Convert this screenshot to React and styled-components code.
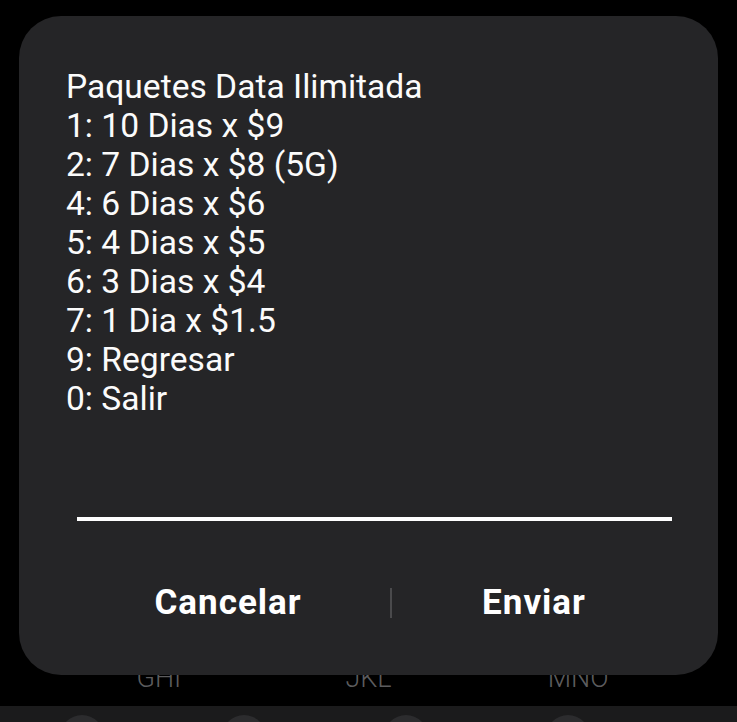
import React from 'react';
import styled, { createGlobalStyle } from 'styled-components';

const GlobalStyle = createGlobalStyle`
    html, body {
        margin: 0;
        padding: 0;
        background: #000;
    }
    body {
        font-family: Roboto, "Noto Sans", sans-serif;
    }
`

////////////// STYLING
const Screen = styled.div`
    position: relative;
    width: 737px;
    height: 722px;
    overflow: hidden;
    background: #000;
    display: flex;
    flex-direction: column;
    justify-content: flex-end;
`

// keyboard peeking out behind the dialog
const KeyRow = styled.div`
    display: flex;
    padding: 0 54px 10px;
    height: 36px;
    align-items: center;
`

const KeyLabel = styled.div`
    flex: 1;
    text-align: center;
    color: #5c5c5e;
    font-size: 27px;
    font-weight: 300;
`

const KeyBar = styled.div`
    height: 16px;
    background: #1b1b1c;
    display: flex;
    gap: 118px;
    padding-left: 60px;
`

const KeyCap = styled.div`
    width: 44px;
    height: 44px;
    margin-top: 9px;
    border-radius: 50%;
    background: #2c2c2e;
`

const Dialog = styled.div`
    position: absolute;
    top: 16px;
    left: 19px;
    width: 699px;
    height: 659px;
    box-sizing: border-box;
    border-radius: 42px;
    background: #252527;
    display: flex;
    flex-direction: column;
    padding: 51px 46px 0 47px;
`

const Message = styled.div`
    color: #fbfbfb;
    font-size: 33.6px;
    line-height: 39px;
    white-space: pre-line;
`

const InputLine = styled.div`
    margin: 99px 0 0 11px;
    height: 4px;
    width: 595px;
    background: #fff;
`

const Actions = styled.div`
    display: grid;
    grid-template-columns: 324px 2px 1fr;
    align-items: center;
    margin-top: 61px;
    margin-right: -4px;
`

const ActionButton = styled.button`
    background: none;
    border: none;
    color: #fff;
    font-family: Roboto, sans-serif;
    font-size: 35px;
    font-weight: 700;
    letter-spacing: 1px;
    padding: 0;
    text-align: center;
`

const Divider = styled.div`
    width: 2px;
    height: 30px;
    background: #4a4a4c;
`

const lines = [
    'Paquetes Data Ilimitada',
    '1: 10 Dias x $9',
    '2: 7 Dias x $8 (5G)',
    '4: 6 Dias x $6',
    '5: 4 Dias x $5',
    '6: 3 Dias x $4',
    '7: 1 Dia x $1.5',
    '9: Regresar',
    '0: Salir',
]

export default function App() {
    return (
        <>
            <GlobalStyle />
            <Screen>
                <KeyRow>
                    <KeyLabel>GHI</KeyLabel>
                    <KeyLabel>JKL</KeyLabel>
                    <KeyLabel>MNO</KeyLabel>
                </KeyRow>
                <KeyBar>
                    <KeyCap />
                    <KeyCap />
                    <KeyCap />
                    <KeyCap />
                </KeyBar>

                {/* USSD dialog */}
                <Dialog>
                    <Message>{lines.join('\n')}</Message>
                    <InputLine />
                    <Actions>
                        <ActionButton>Cancelar</ActionButton>
                        <Divider />
                        <ActionButton>Enviar</ActionButton>
                    </Actions>
                </Dialog>
            </Screen>
        </>
    );
}
